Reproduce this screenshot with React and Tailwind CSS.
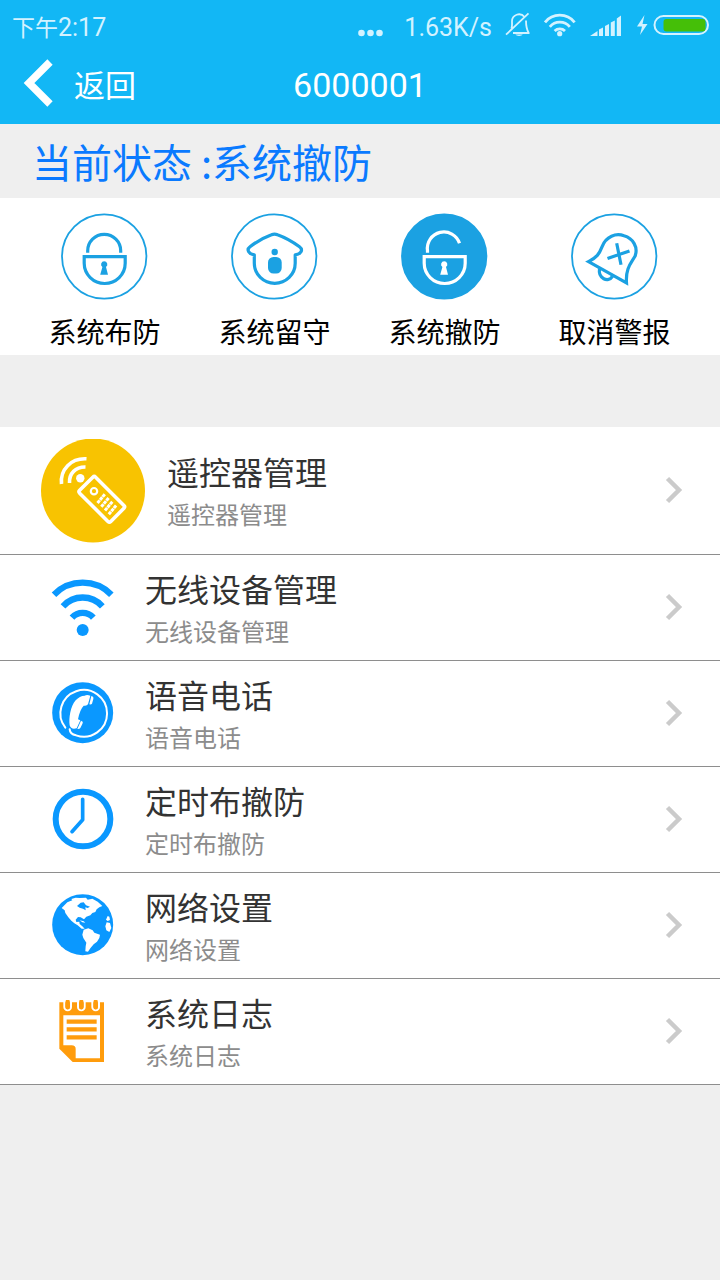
const blue = '#1ba1e2';

const StatusIcons = () => (
    <svg className="overflow-visible" width="202" height="32" viewBox="0 0 202 32" fill="none" stroke="#d3f2ff" strokeWidth="2">
        {/* muted bell */}
        <path d="M6 23H22.500M4.500 18.500C5.300 16 5 14 5 11.500A7 7 0 0 1 17.500 7M19 10.500C19 16 19.500 19.500 21.800 23M-1 24.700L21.500 3.300" strokeWidth="1.800" />
        <path d="M8.300 24.500h7.500a4 2.200 0 0 1-7.500 0z" fill="#d3f2ff" stroke="none" />
        {/* wifi */}
        <path d="M38 12.300a19 19 0 0 1 29.600 0M42.800 16.800a13 13 0 0 1 20 0M47.600 21a7.500 7.500 0 0 1 10.400 0" strokeWidth="2.800" />
        <circle cx="52.700" cy="23.700" r="2.600" fill="#d3f2ff" stroke="none" />
        {/* signal */}
        <path d="M83 26l7.500-5v5zM92 26v-6.500l4-2V26zM98 26V16l4-2v12zM103.800 26V12.500l4-2V26zM109.800 26V8.500l4.200-3V26z" fill="#d3f2ff" stroke="none" />
        {/* battery */}
        <path d="M137.500 5L130 16.500h5L133 25l7.500-11h-5z" fill="#d3f2ff" stroke="none" />
        <rect x="147.500" y="6" width="53.500" height="18" rx="9" />
        <rect x="156.500" y="9" width="42" height="12.500" rx="3" fill="#45bf08" stroke="none" />
    </svg>
);

const Lock = ({ open, color }) => (
    <g stroke={color} strokeWidth="3.200" fill="none">
        <path d={open ? 'M26.500 39.500V37.500A16.500 16.500 0 0 1 58.500 30' : 'M26.700 39.500V37.500A16.500 16.500 0 0 1 59.700 37.500V39.500'} />
        <path d="M23.200 43.300H64.200V50A20.500 20.200 0 0 1 23.200 50Z" />
        <path d="M43.200 48a3.200 3.200 0 0 1 1.800 5.800L47 61.500h-7.800l2.200-7.700A3.200 3.200 0 0 1 43.200 48z" fill={color} stroke="none" />
    </g>
);

const House = () => (
    <g stroke={blue} strokeWidth="3.200" fill="none" strokeLinejoin="round">
        <path d="M23.300 41.500C18 41 15 36.500 19 33.500C26 28 35 23.500 40.500 21.500Q43.500 20.300 46.500 21.500C52 23.500 61 28 68.500 33.500C72.500 36.500 70 41 64.200 41.500V50A20.400 20 0 0 1 23.300 50Z" />
        <circle cx="43.700" cy="38.700" r="3.200" fill={blue} stroke="none" />
        <rect x="37" y="43.700" width="13.700" height="16.600" rx="5.500" fill={blue} stroke="none" />
    </g>
);

const CancelBell = () => (
    <g stroke={blue} strokeWidth="3.200" fill="none">
        <path d="M17.500 48.300C26 44 28 41 31 33.500C35 23 45 19.500 53 22.500C62 25 67.500 34 64 43C60 50 54.500 55 55.500 69.500Z" />
        <path d="M28.500 55.500C27 65 37 70 41.500 63" />
        <path d="M45.700 30l4.300 21.500M36.500 45.200L58.500 37.600" />
    </g>
);

const actions = [
    { label: '系统布防', icon: <Lock color={blue} /> },
    { label: '系统留守', icon: <House /> },
    { label: '系统撤防', icon: <Lock open color="#fff" />, active: true },
    { label: '取消警报', icon: <CancelBell /> },
];

const RemoteIcon = () => (
    <svg width="104" height="104" viewBox="0 .500 104 104" fill="none" stroke="#fff">
        <circle cx="52" cy="52" r="52" fill="#f8c301" stroke="none" />
        <path d="M20.500 45.500C19 31 30 19.500 45.500 20.300M28.500 44.500C28 35 34.500 28.300 44.500 28.500" strokeWidth="3.600" />
        <circle cx="39.300" cy="39.700" r="4.200" fill="#fff" stroke="none" />
        <rect x="-11.300" y="-22" width="22.600" height="44" rx="2" strokeWidth="3.600" transform="translate(60.800 60.800) rotate(-45)" />
        <circle cx="53" cy="52.700" r="3.200" strokeWidth="2.200" />
        <path d="M56.500 64.500l7.500-9M60.300 68.300l7.500-9M64 72l7.500-9M67.800 75.800l7.500-9" strokeWidth="3" strokeDasharray="3.400 .6" />
    </svg>
);

const WifiIcon = () => (
    <svg width="64" height="64" viewBox="33 33 192 192" fill="none" stroke="#0a98ff" strokeWidth="19">
        <path d="M42 89A121 121 0 0 1 214 89M69 124A79 79 0 0 1 187 124M96 158A43 43 0 0 1 160 158" />
        <circle cx="128" cy="195" r="18" fill="#0a98ff" stroke="none" />
    </svg>
);

const PhoneIcon = () => (
    <svg width="64" height="64" viewBox="33 36 192 192" fill="none" stroke="#fff">
        <circle cx="128" cy="128" r="91.500" fill="#0a98ff" stroke="none" />
        <path d="M76 173A70 70 0 1 1 108 196Q90 192 89 178" strokeWidth="6" strokeLinecap="round" />
        <path d="M134 77Q141 73 151 77L144 103Q137 109 131 107Q119 120 114 148L121 151L110 175Q93 180 89 166C86 145 91 110 107 91Q119 77 134 77Z" fill="#fff" stroke="none" />
        <path d="M154 78l5 2q2 3 1 7l-4 14q-2 3-8 2zM123 152l5 3q1 3-1 7l-6 12q-3 4-9 3z" fill="#fff" stroke="none" />
    </svg>
);

const ClockIcon = () => (
    <svg width="64" height="64" viewBox="33 39 192 192" fill="none" stroke="#0a98ff" strokeLinecap="round">
        <circle cx="129" cy="132" r="82" strokeWidth="18" />
        <path d="M128 73V134L96 170" strokeWidth="11" strokeLinejoin="round" />
    </svg>
);

const GlobeIcon = () => (
    <svg width="64" height="64" viewBox="33 42 192 192" fill="#fff">
        <circle cx="128" cy="134" r="91.500" fill="#0a98ff" />
        <path d="M65 84L82 67L97 61L94 57L107 53L119 54L138 53L143 59L157 56L173 65L187 78L178 82L170 88L166 96L157 99L151 106L139 110L132 118L122 112L114 111L107 119L109 126L118 125L119 132L127 139L134 146L125 146L113 136L103 130L94 122L85 112L76 99L74 91Z" />
        <path d="M111 78L122 68L131 67L138 76L150 80L143 84L136 82L137 91L129 86L119 83Z" fill="#0a98ff" />
        <path d="M131 149L145 145L158 151L163 158L180 164L178 174L171 185L161 193L151 205L144 215L136 214L137 199L139 188L130 174L127 164Z" />
        <path d="M203 108L208 110L210 120L203 123L198 119ZM200 127L210 129L214 144L208 156L199 151L196 139Z" />
        <path d="M119 121l12 3 5 4-9-1z" />
    </svg>
);

const NoteIcon = () => (
    <svg width="64" height="64" viewBox="33 45 192 192" fill="none">
        <path d="M58 52H192V231H98L58 191Z" fill="#ff9c0c" />
        <path d="M70 91H180V220H107V192Q107 181 95 181H70Z" fill="#fff" />
        <path d="M80 110H170M80 133H170M80 157H170" stroke="#ff9c0c" strokeWidth="13" />
        {/* binder rings */}
        <path d="M73 46V66a10 10 0 0 0 20 0V46M114 46V66a10 10 0 0 0 20 0V46M157 46V66a10 10 0 0 0 20 0V46" stroke="#fff" strokeWidth="6" />
        <path d="M83 50V67M124 50V67M167 50V67" stroke="#ff9c0c" strokeWidth="13" strokeLinecap="round" />
    </svg>
);

const menuItems = [
    { label: '无线设备管理', icon: <WifiIcon /> },
    { label: '语音电话', icon: <PhoneIcon /> },
    { label: '定时布撤防', icon: <ClockIcon /> },
    { label: '网络设置', icon: <GlobeIcon /> },
    { label: '系统日志', icon: <NoteIcon /> },
];

const Chevron = () => (
    <svg className="ml-auto mr-[37px] -mt-0.5" width="18" height="28" viewBox="0 0 18 28" fill="none" stroke="#cbcbcb" strokeWidth="4.500">
        <path d="M2.500 2.500L14 14L2.500 25.500" />
    </svg>
);

const ItemText = ({ label }) => (
    <div className="pt-2">
        <p className="text-[32px] leading-[42px] text-[#333]">{label}</p>
        <p className="text-2xl leading-[42px] text-[#8c8c8c]">{label}</p>
    </div>
);

export default function App() {
    return (
        <div className="w-[720px] h-[1280px] bg-[#efefef] overflow-hidden whitespace-nowrap font-['Roboto','Noto_Sans_CJK_SC',sans-serif]">
            <header className="h-[124px] bg-[#12b7f5] text-white">
                <div className="flex items-center h-[52px] pl-3 pr-[11px] text-[25px] text-[#d3f2ff]">
                    <span className="pt-[3px]"><span className="text-[23px]">下午</span>2:17</span>
                    <svg className="ml-auto mr-[21px] mt-[14px]" width="25" height="8" viewBox="0 0 25 8" fill="#d3f2ff">
                        <circle cx="3.500" cy="4" r="3.300" />
                        <circle cx="12.500" cy="4" r="3.300" />
                        <circle cx="21.500" cy="4" r="3.300" />
                    </svg>
                    <span className="mr-[15px] pt-[3px]">1.63K/s</span>
                    <StatusIcons />
                </div>
                <div className="grid grid-cols-3 items-center h-[66px]">
                    <div className="flex items-center">
                        <svg className="ml-[22px] mr-5 -mt-1" width="32" height="48" viewBox="0 0 32 48" fill="none" stroke="#fff" strokeWidth="7.500">
                            <path d="M28 3L7 24L28 45" />
                        </svg>
                        <span className="pt-1 text-[31px]">返回</span>
                    </div>
                    <h1 className="text-center text-[34px]">6000001</h1>
                </div>
            </header>

            <div className="h-[74px] pl-8 text-[40px] leading-[74px] text-[#0a7aff] font-['Noto_Sans_CJK_SC',sans-serif]">当前状态 :系统撤防</div>

            <div className="flex h-[157px] pl-[19px] pt-[15px] bg-white">
                {actions.map((item) => (
                    <div key={item.label} className="w-[170px] flex flex-col items-center">
                        <svg width="87" height="87" viewBox="0 -.300 87 87">
                            <circle cx="43.200" cy="43.200" r="42.200" fill={item.active ? blue : 'none'} stroke={blue} strokeWidth="1.800" />
                            {item.icon}
                        </svg>
                        <span className="mt-[13px] pl-px text-[28px] leading-[42px] text-black">{item.label}</span>
                    </div>
                ))}
            </div>

            <div className="mt-[72px] bg-white">
                <div className="flex items-center h-32 pl-[41px] border-b border-[#8e8e8e]">
                    <RemoteIcon />
                    <div className="ml-[22px]"><ItemText label="遥控器管理" /></div>
                    <Chevron />
                </div>
                {menuItems.map((item) => (
                    <div key={item.label} className="flex items-center h-[106px] pl-[51px] border-b border-[#8e8e8e]">
                        {item.icon}
                        <div className="ml-[30px]"><ItemText label={item.label} /></div>
                        <Chevron />
                    </div>
                ))}
            </div>
        </div>
    );
}
